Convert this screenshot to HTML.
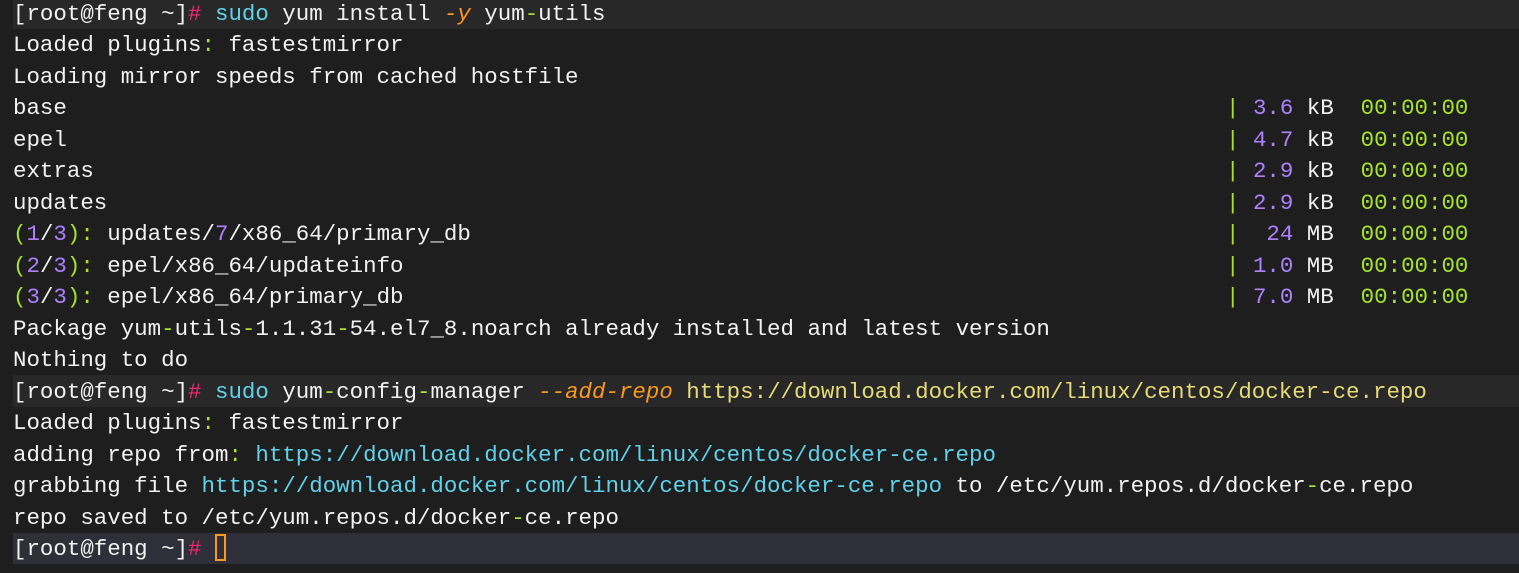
<!DOCTYPE html>
<html><head><meta charset="utf-8"><style>
html,body{margin:0;padding:0;background:#1e1e1e;width:1519px;height:573px;overflow:hidden}
#t{position:absolute;left:0;top:-2.75px;width:1519px;font-family:"Liberation Mono",monospace;font-size:22.45px;color:#f2f2f2}
.l{position:relative;box-sizing:border-box;height:31.5px;line-height:31.5px;padding-top:1.5px;padding-left:13px;white-space:pre}
.p{background:#282828;margin-left:13px;padding-left:0}
.c{background:#2e2f38;margin-left:13px;padding-left:0}
.rt{position:absolute;left:1226px;top:1.5px}
.r{color:#f92672}.b{color:#5fd2ea}.o{color:#fd971f;font-style:italic}.g{color:#a6e22e}.v{color:#ae81ff}.y{color:#e6db74}
.cur{display:inline-block;width:11px;height:27px;border:2px solid #fd971f;box-sizing:border-box;vertical-align:middle;margin-top:-4px}
</style></head><body><div id="t"><div class="l p">[root@feng ~]<span class="r">#</span> <span class="b">sudo</span> yum install <span class="o">-y</span> yum<span class="g">-</span>utils</div><div class="l">Loaded plugins<span class="g">:</span> fastestmirror</div><div class="l">Loading mirror speeds from cached hostfile</div><div class="l">base<span class="rt"><span class="g">|</span> <span class="v">3.6</span> kB  <span class="g">00:00:00</span></span></div><div class="l">epel<span class="rt"><span class="g">|</span> <span class="v">4.7</span> kB  <span class="g">00:00:00</span></span></div><div class="l">extras<span class="rt"><span class="g">|</span> <span class="v">2.9</span> kB  <span class="g">00:00:00</span></span></div><div class="l">updates<span class="rt"><span class="g">|</span> <span class="v">2.9</span> kB  <span class="g">00:00:00</span></span></div><div class="l"><span class="g">(</span><span class="v">1</span>/<span class="v">3</span><span class="g">):</span> updates/<span class="v">7</span>/x86_64/primary_db<span class="rt"><span class="g">|</span>  <span class="v">24</span> MB  <span class="g">00:00:00</span></span></div><div class="l"><span class="g">(</span><span class="v">2</span>/<span class="v">3</span><span class="g">):</span> epel/x86_64/updateinfo<span class="rt"><span class="g">|</span> <span class="v">1.0</span> MB  <span class="g">00:00:00</span></span></div><div class="l"><span class="g">(</span><span class="v">3</span>/<span class="v">3</span><span class="g">):</span> epel/x86_64/primary_db<span class="rt"><span class="g">|</span> <span class="v">7.0</span> MB  <span class="g">00:00:00</span></span></div><div class="l">Package yum<span class="g">-</span>utils<span class="g">-</span>1.1.31<span class="g">-</span>54.el7_8.noarch already installed and latest version</div><div class="l">Nothing to do</div><div class="l p">[root@feng ~]<span class="r">#</span> <span class="b">sudo</span> yum<span class="g">-</span>config<span class="g">-</span>manager <span class="o">--add-repo</span> <span class="y">https://download.docker.com/linux/centos/docker-ce.repo</span></div><div class="l">Loaded plugins<span class="g">:</span> fastestmirror</div><div class="l">adding repo from<span class="g">:</span> <span class="b">https://download.docker.com/linux/centos/docker-ce.repo</span></div><div class="l">grabbing file <span class="b">https://download.docker.com/linux/centos/docker-ce.repo</span> to /etc/yum.repos.d/docker<span class="g">-</span>ce.repo</div><div class="l">repo saved to /etc/yum.repos.d/docker<span class="g">-</span>ce.repo</div><div class="l c">[root@feng ~]<span class="r">#</span> <span class="cur"></span></div></div></body></html>
